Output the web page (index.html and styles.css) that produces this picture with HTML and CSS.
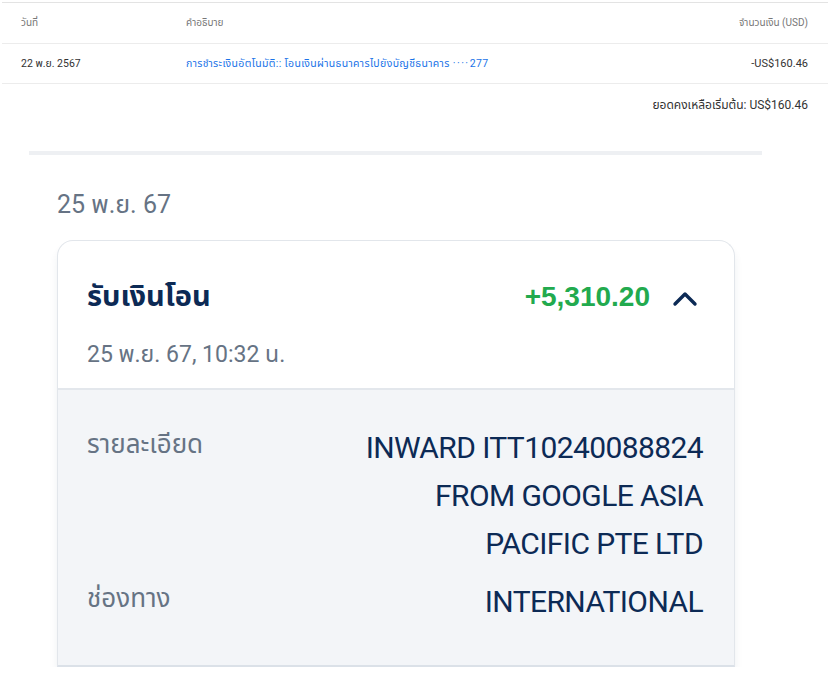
FILE: index.html
```html
<!DOCTYPE html>
<html lang="th">
<head>
<meta charset="utf-8">
<title>รับเงินโอน</title>
<link rel="stylesheet" href="styles.css">
</head>
<body>
  <div class="ledger">
    <div class="ledger-row ledger-head">
      <div class="c-date">วันที่</div>
      <div class="c-desc">คำอธิบาย</div>
      <div class="c-amt">จำนวนเงิน (USD)</div>
    </div>
    <div class="ledger-row ledger-item">
      <div class="c-date">22 พ.ย. 2567</div>
      <div class="c-desc link">การชำระเงินอัตโนมัติ:: โอนเงินผ่านธนาคารไปยังบัญชีธนาคาร <span class="dots">····</span>277</div>
      <div class="c-amt">-US$160.46</div>
    </div>
  </div>
  <div class="balance">ยอดคงเหลือเริ่มต้น: US$160.46</div>

  <div class="separator"></div>

  <div class="day-title">25 พ.ย. 67</div>

  <div class="card">
    <div class="card-head">
      <div class="head-row">
        <div class="title">รับเงินโอน</div>
        <div class="head-right">
          <span class="amount">+5,310.20</span>
          <svg class="chev" width="26" height="18" viewBox="0 0 26 18" aria-hidden="true">
            <path d="M3 15 L13 5 L23 15" fill="none" stroke="#0c2a55" stroke-width="3.4" stroke-linecap="round" stroke-linejoin="round"/>
          </svg>
        </div>
      </div>
      <div class="subtitle">25 พ.ย. 67, 10:32 น.</div>
    </div>
    <div class="card-body">
      <div class="detail">
        <div class="label">รายละเอียด</div>
        <div class="value">INWARD ITT10240088824<br>FROM GOOGLE ASIA<br>PACIFIC PTE LTD</div>
      </div>
      <div class="detail">
        <div class="label">ช่องทาง</div>
        <div class="value">INTERNATIONAL</div>
      </div>
    </div>
  </div>
</body>
</html>
```

FILE: styles.css
```css
* { box-sizing: border-box; }

html, body {
  margin: 0;
  padding: 0;
  background: #ffffff;
}

body {
  font-family: Roboto, "Noto Sans Thai", "Noto Sans", "Liberation Sans", sans-serif;
  color: #333333;
}

.ledger {
  margin: 2px 2px 0 2px;
  border-top: 1px solid #e3e3e3;
}

.ledger-row {
  display: flex;
  align-items: center;
  border-bottom: 1px solid #ececec;
}

.ledger-head {
  height: 41px;
  font-size: 10px;
  color: #777777;
}

.ledger-item {
  height: 40px;
  font-size: 10.5px;
  color: #333333;
}

.c-date {
  width: 184px;
  padding-left: 19px;
}

.c-desc {
  flex: 1;
}

.link {
  color: #1a73e8;
  font-size: 10.5px;
  letter-spacing: 0.35px;
}

.dots {
  letter-spacing: 1.5px;
}

.c-amt {
  padding-right: 20px;
  text-align: right;
}

.ledger-item .c-amt {
  font-size: 11px;
}

.balance {
  margin-top: 11px;
  padding-right: 22px;
  text-align: right;
  font-size: 12px;
  line-height: 20px;
  color: #333333;
}

.separator {
  margin: 36px 0 0 29px;
  width: 733px;
  height: 4px;
  background: #eef0f3;
}

.day-title {
  margin: 34px 0 0 57px;
  font-size: 25px;
  line-height: 32px;
  color: #667384;
}

.card {
  margin: 19px 0 0 57px;
  width: 678px;
  border: 1.5px solid #e2e6eb;
  border-bottom: 2px solid #dbe1e8;
  border-radius: 16px 16px 0 0;
  background: #ffffff;
  box-shadow: 0 7px 9px rgba(30, 50, 80, 0.07);
}

.card-head {
  padding: 38px 36px 17px 29px;
  border-bottom: 2px solid #e3e7ec;
}

.head-row {
  display: flex;
  align-items: center;
  justify-content: space-between;
  height: 36px;
}

.title {
  font-size: 29px;
  font-weight: 700;
  color: #0c2a55;
}

.head-right {
  display: flex;
  align-items: center;
  gap: 22px;
}

.amount {
  font-family: "Liberation Sans", Roboto, sans-serif;
  font-size: 28px;
  font-weight: 700;
  color: #22aa4e;
}

.chev {
  display: block;
  margin-top: 2px;
}

.subtitle {
  margin-top: 24px;
  font-size: 23px;
  line-height: 32px;
  color: #667384;
}

.card-body {
  background: #f3f5f8;
  padding: 34px 31px 39px 29px;
  display: flex;
  flex-direction: column;
  gap: 10px;
}

.detail {
  display: flex;
  justify-content: space-between;
  align-items: flex-start;
}

.label {
  font-size: 26px;
  line-height: 40px;
  color: #667384;
}

.value {
  font-size: 30px;
  font-weight: 400;
  line-height: 48px;
  text-align: right;
  color: #0c2a55;
  letter-spacing: -0.6px;
}
```
